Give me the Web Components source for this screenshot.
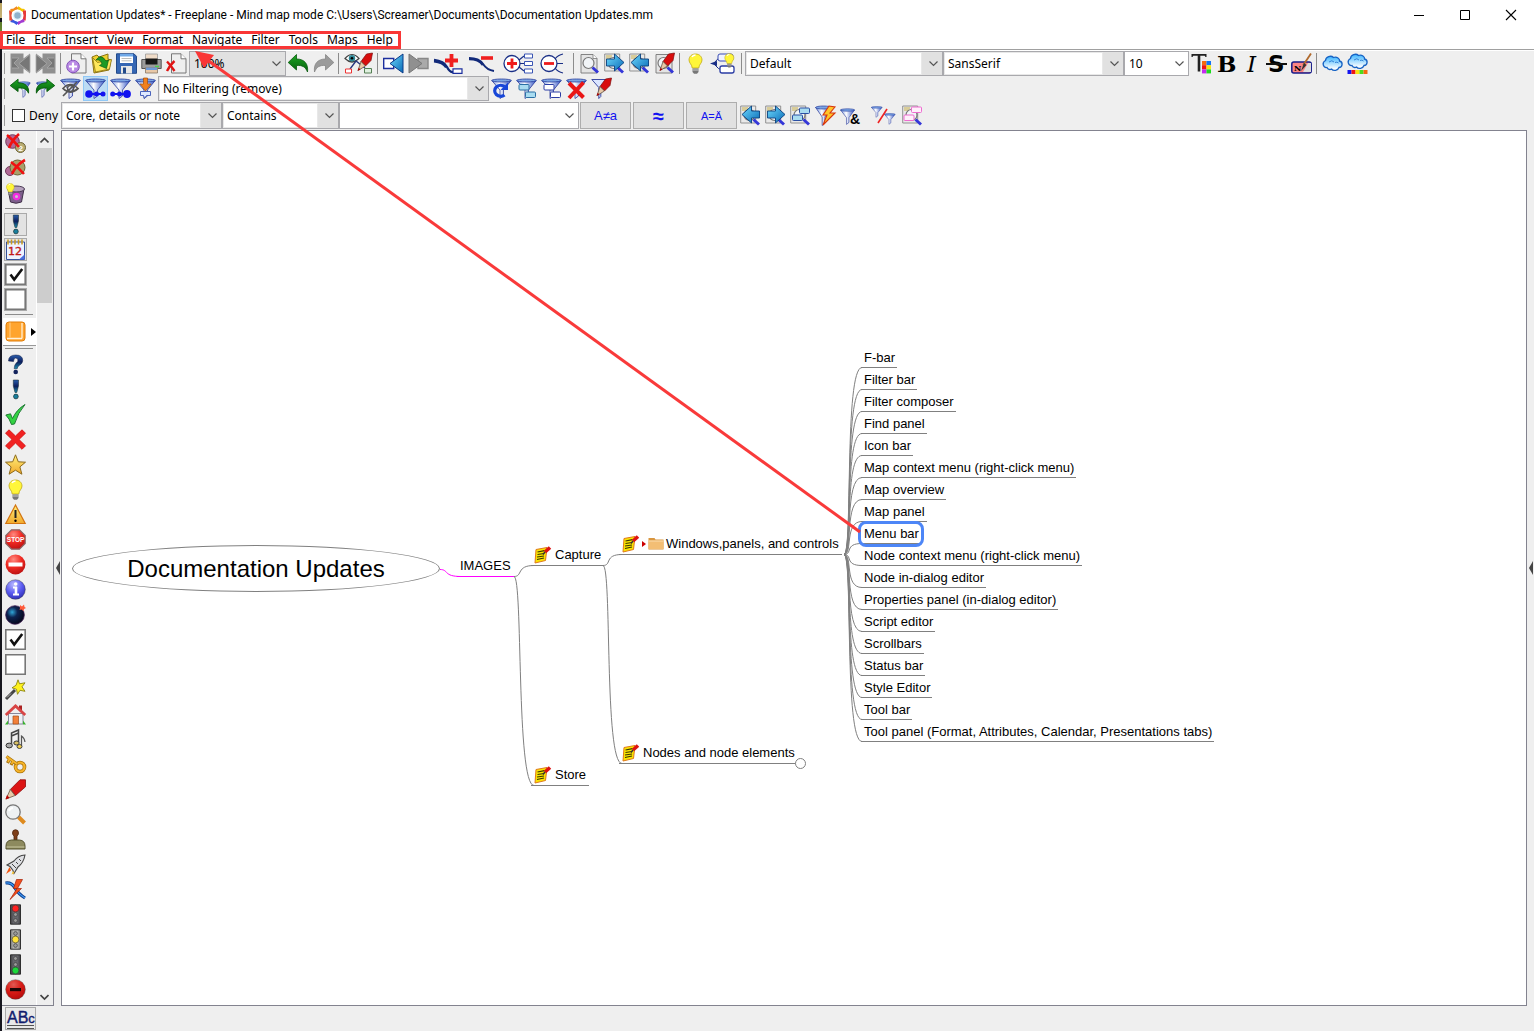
<!DOCTYPE html>
<html lang="en">
<head>
<meta charset="utf-8">
<title>Documentation Updates* - Freeplane</title>
<style>
  html, body { margin: 0; }
  body {
    --edge: #808080;
    --face: #efefef;
    --ui: "Noto Sans", "Open Sans", sans-serif;
    background: var(--face);
    color: #000;
    font: 12px/16px var(--ui);
  }
</style>
</head>
<body>
<fp-app></fp-app>
<script>
const defs = `<defs>
<linearGradient id="gb" x1="0" y1="0" x2="1" y2="1"><stop offset="0" stop-color="#6fdcff"/><stop offset="1" stop-color="#0869b5"/></linearGradient>
<linearGradient id="gf" x1="0" y1="0" x2="1" y2="0"><stop offset="0" stop-color="#6f93e0"/><stop offset=".4" stop-color="#fff"/><stop offset="1" stop-color="#2a4fc4"/></linearGradient>
<linearGradient id="gg" x1="0" y1="0" x2="0" y2="1"><stop offset="0" stop-color="#1fa524"/><stop offset="1" stop-color="#05600d"/></linearGradient>
<linearGradient id="gy" x1="0" y1="0" x2="0" y2="1"><stop offset="0" stop-color="#fff07a"/><stop offset="1" stop-color="#f2a92c"/></linearGradient>
<radialGradient id="gr" cx=".4" cy=".25" r=".8"><stop offset="0" stop-color="#ff8a80"/><stop offset=".5" stop-color="#f02a22"/><stop offset="1" stop-color="#b80f0f"/></radialGradient>
<radialGradient id="gi" cx=".4" cy=".25" r=".8"><stop offset="0" stop-color="#b9b9ff"/><stop offset=".55" stop-color="#5a5af0"/><stop offset="1" stop-color="#2c2cb0"/></radialGradient>
<radialGradient id="gn" cx=".35" cy=".35" r=".7"><stop offset="0" stop-color="#2fa6d8"/><stop offset=".4" stop-color="#0d2350"/><stop offset="1" stop-color="#050518"/></radialGradient>
<linearGradient id="gq" x1="0" y1="0" x2="0" y2="1"><stop offset="0" stop-color="#2a5fae"/><stop offset=".5" stop-color="#0b1d5c"/><stop offset="1" stop-color="#1c8fae"/></linearGradient>
<linearGradient id="gc" x1="0" y1="0" x2="0" y2="1"><stop offset="0" stop-color="#3ab4ff"/><stop offset=".9" stop-color="#fff"/></linearGradient>
</defs>`;

/* Shared fragments, all on a 21-unit grid */
const funnel = `<path d="M.8 2.500h19.400l-7.700 9.500v6l-3.500 2.500v-8.500z" fill="url(#gf)" stroke="#2b3b9a" stroke-width=".8"/><ellipse cx="10.500" cy="2.500" rx="9.800" ry="1.500" fill="#7ba6e4" stroke="#23389c" stroke-width=".8"/>`;
const smallFunnel = (x, y) => `<g transform="translate(${x} ${y}) scale(.55)">${funnel}</g>`;
const page = `<path d="M2 1.500h12l4 4v14.500h-16z" fill="#e4e4e4" stroke="#777" stroke-width=".9"/><path d="M14 1.500v4h4" fill="#fff" stroke="#777" stroke-width=".8"/>`;
const lens = `<circle cx="9.500" cy="10" r="5.500" fill="#f3f7fa" fill-opacity=".85" stroke="#777" stroke-width="1.200"/><path d="M13.500 14.500l5.500 5" stroke="#3436d8" stroke-width="3"/>`;
const find = `<path d="M.7 1h15v17h-15z" fill="#e9e9e9" stroke="#888" stroke-width=".9"/><path d="M2 3h6M2 5h5" stroke="#c8b04a"/>` + lens;
const arrowR = `<path d="M2.500 6h8v-5l9.500 8.500-9.500 8.500v-5h-8z" fill="url(#gb)" stroke="#0b3f7e" stroke-width=".9"/>`;
const arrowL = `<path d="M19.500 6h-8v-5l-9.500 8.500 9.500 8.500v-5h8z" fill="url(#gb)" stroke="#0b3f7e" stroke-width=".9"/>`;
const pen = `<path d="M20.500 0l-6 1-5.500 7.500 4.500 4.500 5.500-5.500z" fill="#d80d0d" stroke="#7c0808" stroke-width=".7"/><path d="M9 8.500l4.500 4.500-7.500 4.500z" fill="#e8c9a8" stroke="#543" stroke-width=".7"/><path d="M5.500 18l3-1.500-1.800-1.800z" fill="#a00"/>`;
const bulb = `<path d="M10.500 1c-4 0-6.500 2.700-6.500 6 0 3.200 3 4.300 3.200 8h6.600c.2-3.700 3.200-4.800 3.200-8 0-3.300-2.500-6-6.500-6z" fill="#fff63a" stroke="#c0a818" stroke-width=".8"/><path d="M7 4q1-2 3.500-2" stroke="#fff" stroke-width="1.500" fill="none"/><path d="M7.500 15.500h6v3.500l-1.500 1.700h-3l-1.500-1.700z" fill="#777"/><path d="M7.500 17h6" stroke="#ccc"/>`;
const check = `<path d="M.8.8h19.400v19.400h-19.400z" fill="#fff" stroke="#777" stroke-width="1.600"/>`;
const tick = `<path d="M5.500 10.500l3.700 5 8-10.500" fill="none" stroke="#111" stroke-width="2.600"/>`;
const cloud = `<path d="M5 14.500c-4 .5-5.500-5-1.500-7 .2-4 5.500-5.500 8-3 3.500-1 6.500 1 6 3.500 4 1 3 6.500-.5 6.500-1 3-5.500 4-7.500 1.500-1.500 1-3.500.5-4.500-1.500z" fill="url(#gc)" stroke="#1763c4" stroke-width="1.300"/><path d="M7 9q3-2.500 5 0M13 9.500q2-1 3.500.5" fill="none" stroke="#2a7bd2" stroke-width=".9"/>`;
const light = (i) => `<path d="M5.500.8h10v19.400h-10z" fill="${i === 1 ? '#8a8a8a' : '#4c4c50'}" stroke="#222" stroke-width=".9"/><path d="M7.500 1.500h6v18h-6z" fill="${i === 1 ? '#b5b5b0' : '#66666c'}"/>` +
  ['#f22', '#ffe23a', '#1bd83a'].map((c, n) => `<circle cx="10.500" cy="${4.500 + 6 * n}" r="${n === i ? 3.400 : 1.900}" fill="${n === i ? c : '#999'}" stroke="#333" stroke-width=".6"/>`).join('');
const ball = (fill) => `<circle cx="10.500" cy="10.500" r="9.800" fill="${fill}" stroke="#333" stroke-opacity=".5" stroke-width=".8"/>`;
const box = (x, y, f, s) => `<rect x="${x}" y="${y}" width="10" height="5.500" rx="1" fill="${f}" stroke="${s}"/>`;

const icons = {
  logo: `<g stroke-width="3" fill="none"><path d="M10.500 2.500l3.500 2.500 3.500.5" stroke="#f5c400"/><path d="M17.500 5.500v5l-.3 5" stroke="#e63a3a"/><path d="M17.200 15.500l-3.700 1-3 2.200" stroke="#a33bd1"/><path d="M10.500 18.700l-3-2.200-3.700-1" stroke="#3a57e0"/><path d="M3.800 15.500v-5l-.3-5" stroke="#e8503a"/><path d="M3.500 5.500l3.500-.5 3.500-2.500" stroke="#f28a1e"/></g><circle cx="10.500" cy="10.500" r="5.300" fill="#dff1fb" stroke="#fff" stroke-width="1.500"/><circle cx="10.500" cy="10.500" r="3.200" fill="#8fb2cc"/>`,
  mapback: `<path d="M.5.5h13v5l6.500-5v20l-6.500-5v5h-13z" fill="#8f8f8f"/><path d="M2 5h7l-5 5 5 5h-7M9 10.500l11-9v18z" fill="#777" stroke="#aaa" stroke-width=".8"/>`,
  mapnext: `<path d="M20.500.5h-13v5l-6.500-5v20l6.500-5v5h13z" fill="#8f8f8f"/><path d="M19 5h-7l5 5-5 5h7M12 10.500l-11-9v18z" fill="#777" stroke="#aaa" stroke-width=".8"/>`,
  newmap: `<path d="M5.500.8h9.500l5 5v14.200h-14.500z" fill="#efefef" stroke="#777"/><path d="M15 .8v5h5" fill="#fff" stroke="#777"/><circle cx="7" cy="13.500" r="6.300" fill="#b98ae4" stroke="#8656bb"/><path d="M7 9.500v8M3 13.500h8" stroke="#fff" stroke-width="2.200"/>`,
  open: `<path d="M1 4l5-2 2 2 9-3v5l3 1-2 10-15 3z" fill="#f0d02e" stroke="#8b7414"/><path d="M1.500 4.500l3 14.500 14-3 2-9.500-14 3z" fill="#ffe75a" stroke="#8b7414" stroke-width=".8"/><path d="M5 7q5-7 10 1l2.500-1-2 8.500-7-3 2.500-1.500q-1.500-5-6-4z" fill="#1d9a25" stroke="#0a5c10" stroke-width=".7"/>`,
  save: `<path d="M.5.8h17.500l2.500 2.500v17h-20z" fill="#3566b4" stroke="#234a8a"/><path d="M4 1h13v9h-13z" fill="#fff"/><path d="M4 1h13v2.500h-13z" fill="#6fa8e8"/><path d="M5.500 5.500h10M5.500 7.800h10" stroke="#bbb"/><path d="M5 13h11v7.500h-11z" fill="#e7e7e7"/><path d="M7 14.500h3v6h-3z" fill="#234a8a"/>`,
  print: `<path d="M4.500 1h12v7h-12z" fill="#f0dcc8" stroke="#999" stroke-width=".8"/><path d="M.8 6.500h19.400v9h-19.400z" fill="#9c9c9c" stroke="#555"/><path d="M4.500 5.500h12v6h-12z" fill="#181818"/><path d="M14 13.500h4" stroke="#4bd14b" stroke-width="1.500"/><path d="M4.500 14.500h12v5.500h-12z" fill="#e8c8a8" stroke="#876" stroke-width=".8"/><path d="M5 14.500h11v2.500h-11z" fill="#6f9bd8"/>`,
  closemap: `<path d="M5.500.8h9.500l5 5v14.200h-14.500z" fill="#efefef" stroke="#777"/><path d="M15 .8v5h5" fill="#fff" stroke="#777"/><path d="M1 8.500q4 4 7.500 9.500M8.500 8q-4.500 4-7.500 10" stroke="#e01515" stroke-width="2.400" fill="none"/>`,
  undo: `<path d="M8.500 1.500v4.500c8 0 12 5 11 13-2-5-5-7-11-6.500v4.500l-8.300-7.500z" fill="url(#gg)" stroke="#075a0c" stroke-width=".8"/>`,
  redo: `<path d="M12.500 1.500v4.500c-8 0-12 5-11 13 2-5 5-7 11-6.500v4.500l8.300-7.500z" fill="#9a9a9a" stroke="#858585" stroke-width=".8"/>`,
  eyepen: `<path d="M1 5.500q7-8 14 0q-7 7-14 0z" fill="#fff" stroke="#444" stroke-width="1.200"/><circle cx="8" cy="5.300" r="3.200" fill="#2f8796"/><circle cx="8" cy="5.300" r="1.300"/><path d="M6 16l6-8 9 7" fill="none" stroke="#26367e" stroke-width="1.300"/><g transform="translate(8 0)">${pen}</g><path d="M1.500 16h6v4h-6z" fill="#fff" stroke="#e33"/><path d="M20.500 15.500h7v4.500h-7z" fill="#dff0df" stroke="#557f55"/>`,
  prev: `<path d="M.7 5.500h10v10h-10z" fill="#fff" stroke="#1c2f9e" stroke-width="1.400"/><path d="M20 1v19l-13-9.500z" fill="url(#gb)" stroke="#0a3a88"/>`,
  next: `<path d="M10 5.500h10v10h-10z" fill="#aaa" stroke="#888" stroke-width="1.400"/><path d="M1 1v19l13-9.500z" fill="#909090" stroke="#777"/>`,
  addnode: `<path d="M1 7q10 1 13 7t7 5" fill="none" stroke="#122a7a" stroke-width="2.300"/><path d="M1 8.500q9 1 12 6" stroke="#122a7a" stroke-width="2" fill="none"/><path d="M18.500 1v13M12 7.500h13" stroke="#f01f1f" stroke-width="3.800"/><path d="M20 15.800h9v4.500h-9z" fill="#fff" stroke="#1c2f9e" stroke-width="1.200"/>`,
  subnode: `<path d="M1 5q10 0 14 6t11 7" fill="none" stroke="#122a7a" stroke-width="2"/><path d="M1 6q10 0 14 6" fill="none" stroke="#122a7a" stroke-width="2.600"/><path d="M13 5h12" stroke="#f01f1f" stroke-width="3.600"/>`,
  unfold: `<circle cx="9" cy="10.500" r="8" fill="#fff" stroke="#1a2f86" stroke-width="1.300"/><path d="M9 5.500v10M4 10.500h10" stroke="#ee1c1c" stroke-width="2.800"/><path d="M16 7l5-4M17 10.500h4M16 14l5 4" stroke="#1a2f86" stroke-width="1.200"/><path d="M21.500 1h8v4h-8zM21.500 8.500h8v4h-8zM21.500 16h8v4h-8z" fill="#fff" stroke="#3a55b4"/>`,
  fold: `<circle cx="11" cy="10.500" r="8" fill="#fff" stroke="#1a2f86" stroke-width="1.300"/><path d="M6 10.500h10" stroke="#ee1c1c" stroke-width="2.800"/><path d="M17 6q3-4 8-5M19 10.500h6M17 15q3 4 8 5" stroke="#1a2f86" stroke-width="1.200" fill="none"/>`,
  find: page + lens,
  findnext: find + arrowR,
  findprev: find + arrowL,
  findpen: page + lens + pen,
  bulb,
  bulbnode: `<path d="M0 10.500l7-2.500v5z" fill="#1a2f86"/><path d="M4 10q5-6 8-7M4 11q5 6 8 6" stroke="#1a2f86" fill="none"/><rect x="8" y="1" width="15" height="7" rx="2" fill="#f0f3ff" stroke="#3a4db4"/><rect x="10" y="13" width="14" height="7" rx="2" fill="#fff" stroke="#2a3ca4" stroke-width="1.300"/><g transform="translate(12 0) scale(.7)">${bulb}</g>`,
  fundo: `<g transform="translate(7 3) scale(.65 .8)">${funnel}</g><g transform="scale(.95 .8)"><path d="M8.500 1.500v4.500c8 0 12 5 11 13-2-5-5-7-11-6.500v4.500l-8.300-7.500z" fill="url(#gg)" stroke="#075a0c"/></g>`,
  fredo: `<g transform="translate(1 3) scale(.65 .8)">${funnel}</g><g transform="scale(.95 .8)"><path d="M12.500 1.500v4.500c-8 0-12 5-11 13 2-5 5-7 11-6.500v4.500l8.300-7.500z" fill="url(#gg)" stroke="#075a0c"/></g>`,
  fhide: funnel + `<path d="M3 10.500q7-8 15 0q-8 7-15 0zM3 18l14-14" fill="none" stroke="#555" stroke-width="1.700"/><circle cx="10.500" cy="10.500" r="3" fill="none" stroke="#555" stroke-width="1.500"/>`,
  fdown: funnel + `<path d="M5 16h12" stroke="#1212f0" stroke-width="2"/><circle cx="4" cy="16" r="3.800" fill="#1212f0"/><circle cx="11.500" cy="16" r="2.500" fill="#1212f0"/><circle cx="18" cy="16" r="2.500" fill="#1212f0"/>`,
  fup: funnel + `<path d="M3 16h12" stroke="#1212f0" stroke-width="2"/><circle cx="2.700" cy="16" r="2.500" fill="#1212f0"/><circle cx="9.500" cy="16" r="2.500" fill="#1212f0"/><circle cx="17" cy="16" r="3.900" fill="#1212f0"/>`,
  fapply: funnel + `<path d="M8.500 0h4v6h3.500l-5.500 7-5.500-7h3.500z" fill="#f2801c" stroke="#a34e08" stroke-width=".7"/><path d="M5.500 13.500h10v4h-4l-2 3-1-3h-3z" fill="#dfe9ff" stroke="#3a55b4" stroke-width=".9"/>`,
  frefresh: funnel + `<path d="M13.500 8.500a6 5.500 0 1 0 0 8.500" stroke="#1746d8" stroke-width="3.200" fill="none"/><path d="M9.500 12h7.500v-7.500z" fill="#1746d8"/>`,
  fsel: funnel + box(3, 6.500, '#a9dcf0', '#2a6fa4') + box(9.500, 14, '#a9dcf0', '#2a6fa4'),
  fsel2: funnel + box(3, 6.500, '#fff', '#2a3ca4') + box(9.500, 14, '#fff', '#2a3ca4'),
  fdel: funnel + `<path d="M3 5l14.500 14.500M17.500 4.500l-14.500 15.500" stroke="#ea1616" stroke-width="4"/>`,
  fedit: `<path d="M.8 1.500h15l-6 8v9l-2 2v-11z" fill="#dbe6ff" stroke="#2b3b9a" stroke-width=".9"/>` + pen,
  findsel: find + box(9.500, 3, '#a9dcf0', '#2a4fa4') + box(2.500, 10, '#a9dcf0', '#2a4fa4'),
  flash: `<g transform="scale(.8 1)">${funnel}</g><path d="M14 1l-6 9h4l-4 10 12-12h-5l5-6z" fill="#ffc52a" stroke="#d8350d" stroke-width="1.100"/>`,
  fand: `<g transform="translate(0 3) scale(.72 .8)">${funnel}</g><text x="10" y="19" font-family="Liberation Sans" font-weight="700" font-size="14">&amp;</text>`,
  for: smallFunnel(0, 1) + smallFunnel(13, 8) + `<path d="M7 18l9-14" stroke="#e22" stroke-width="1.600"/>`,
  findpink: find + box(9.500, 2, '#fff0fb', '#ee6bd0') + box(2, 10, '#fff0fb', '#ee6bd0'),
  tcolor: `<path d="M.5 1h15v3h-1l-.8-1.300h-4.400v15.800h-2.600v-15.800h-4.400l-.8 1.300h-1z" fill="#222"/><path d="M11 8h4.500v4.200h-4.500z" fill="#f56a0e"/><path d="M15.500 8h4.500v4.200h-4.500z" fill="#1273f3"/><path d="M11 12.200h4.500v4.200h-4.500z" fill="#f01414"/><path d="M15.500 12.200h4.500v4.200h-4.500z" fill="#f7e410"/><path d="M11 16.400h4.500v4h-4.500z" fill="#c52af0"/><path d="M15.500 16.400h4.500v4h-4.500z" fill="#1ddc1d"/>`,
  bold: `<text x="1" y="19" font-family="DejaVu Serif" font-weight="700" font-size="23">B</text>`,
  italic: `<text x="6" y="19" font-family="DejaVu Serif" font-style="italic" font-size="23">I</text>`,
  strike: `<text x="2" y="19" font-family="DejaVu Sans" font-weight="700" font-size="23">S</text><path d="M0 11h21" stroke="#111" stroke-width="2"/>`,
  nodestyle: `<rect x=".8" y="9" width="19.400" height="11" rx="2" fill="#fb8484" stroke="#161a8a" stroke-width="1.500"/><path d="M12 19l5-9h3v9z" fill="#ddd"/><text x="3" y="18" font-family="DejaVu Serif" font-weight="700" font-size="8">N</text><path d="M20 .5l-8 12" stroke="#b0692c" stroke-width="1.800"/><path d="M13 10l2.500 2-5.500 6z" fill="#333"/>`,
  cloud,
  cloudcolor: `<g transform="translate(0 -2)">${cloud}</g><path d="M.5 17h4v4h-4z" fill="#1414f0"/><path d="M4.500 17h4v4h-4z" fill="#f01414"/><path d="M8.500 17h4v4h-4z" fill="#f7e410"/><path d="M12.500 17h4v4h-4z" fill="#4cdc1d"/><path d="M16.500 17h4v4h-4z" fill="#f56a0e"/>`,
  delfirst: `<circle cx="7.500" cy="8.500" r="6.800" fill="#b26a97" stroke="#713a5c"/><circle cx="15.500" cy="14.500" r="5" fill="#b9ad72" stroke="#6b6236"/><text x="13.500" y="18" font-family="Liberation Sans" font-weight="700" font-size="8" fill="#fff">2</text><path d="M2 2q6 5 12 12M14 1q-7 6-10 14" fill="none" stroke="#f01010" stroke-width="2.600"/>`,
  dellast: `<circle cx="5" cy="13" r="4.500" fill="#b26a97" stroke="#713a5c"/><circle cx="12.500" cy="9.500" r="7.500" fill="#a8a06a" stroke="#6b6236"/><path d="M6 4q7 5 13 12M20 2q-9 5-13 14" fill="none" stroke="#f01010" stroke-width="2.600"/>`,
  trash: `<path d="M3 6h16l-2.500 13q-5.500 2.500-11 0z" fill="#7d5f8c" stroke="#3f3048"/><ellipse cx="11" cy="6" rx="8.500" ry="3" fill="#b5a2bd" stroke="#4c3b55"/><circle cx="11.500" cy="13.500" r="2.700" fill="#cdb8d4" stroke="#f22de0" stroke-width="2.200"/><g transform="translate(-1 0) scale(.6)">${bulb}</g>`,
  excl: `<path d="M8.300 1h5.200q.8 6-1.700 12.500h-1.800q-2.500-6.500-1.700-12.500z" fill="url(#gq)" stroke="#122" stroke-width=".5"/><circle cx="10.900" cy="17.500" r="2.400" fill="#197e9c" stroke="#122" stroke-width=".6"/>`,
  calendar: `<path d="M1.500 3h18v17.500h-18z" fill="#eef3ff" stroke="#34519c"/><path d="M14 20.500l5.500-5v5z" fill="#4b6fe0"/><path d="M3 .5v5M6.500.5v5M10 .5v5M13.500.5v5M17 .5v5" stroke="#c8991d" stroke-width="1.500"/><text x="3" y="16" font-family="DejaVu Sans" font-size="11" fill="#c21818" stroke="#c21818" stroke-width=".4">12</text>`,
  checked: check + tick,
  unchecked: check,
  book: `<rect x="1" y="1" width="19" height="19" rx="3" fill="#ffa42e" stroke="#e07d08"/><path d="M2 17.500h15M17 2v15.500" stroke="#fff0d8" stroke-width="1.300"/><path d="M5 1.500v15" stroke="#ffcf8a"/>`,
  question: `<path d="M3.500 7q0-6 7.200-6 7 0 7 5.500 0 3-3.500 5-2 1.300-2 3.300h-3q-.2-3.700 2-5.700 2.200-1.500 1.700-3.300-.7-2-2.400-1.700-2 .5-2 3.400z" fill="url(#gq)" stroke="#0b1540" stroke-width=".5"/><circle cx="10.700" cy="18" r="2.300" fill="#12225c"/>`,
  ok: `<path d="M.8 11l4.700-1.200 2 4.700q4-9 12.500-14-7 8-10.500 19.500l-3 .5q-2-6-5.700-9.500z" fill="#33d243" stroke="#14722a" stroke-width=".9"/>`,
  no: `<path d="M4 .8l6.500 6.200 6.500-6.200 3.500 3.400-6.500 6.300 6.500 6.300-3.500 3.500-6.500-6.300-6.500 6.300-3.500-3.500 6.500-6.300-6.500-6.300z" fill="#f12222" stroke="#d01010" stroke-width=".8"/>`,
  star: `<path d="M10.500.8l2.800 7 7.200.4-5.600 4.700 2 7.300-6.400-4-6.400 4 2-7.300-5.600-4.700 7.200-.4z" fill="url(#gy)" stroke="#8d6a1c"/>`,
  warn: `<path d="M10.500 1l9.700 18.500h-19.400z" fill="url(#gy)" stroke="#d37410" stroke-width="1.200"/><path d="M10.500 6v8" stroke="#222" stroke-width="2"/><circle cx="10.500" cy="16.700" r="1.200"/>`,
  stop: `<path d="M6.500.8h8l5.700 5.700v8l-5.700 5.700h-8l-5.700-5.700v-8z" fill="url(#gr)" stroke="#8a6a6a" stroke-width="1.200"/><text x="1.800" y="13" font-family="Liberation Sans" font-weight="700" font-size="6.500" fill="#fff">STOP</text>`,
  noentry: `<circle cx="10.500" cy="10.500" r="9.900" fill="url(#gr)"/><path d="M3.500 8.500h14v4h-14z" fill="#fff"/>`,
  info: ball('url(#gi)') + `<path d="M8 8.500h3v7M8 15.500h6" stroke="#fff" stroke-width="2" fill="none"/><path d="M11 8v7.500" stroke="#fff" stroke-width="2.600"/><circle cx="10.700" cy="5" r="1.800" fill="#fff"/>`,
  bomb: `<circle cx="10" cy="11" r="9.300" fill="url(#gn)" stroke="#3c1a50" stroke-width=".8"/><path d="M15 1l2 1.500 2-2 .5 2.500 1.500 1-2 1-.5 2-2-1.500-2 .5.500-2z" fill="#ff5a3a"/>`,
  wand: `<path d="M1 20l9-9" stroke="#444" stroke-width="3"/><path d="M2 18.500l4-4" stroke="#bbb"/><path d="M13 .8l1.500 4 5.500-1-3 4 3 4.500-5-1-2.500 4-1-5-4.500-1.500 4-2.500z" fill="#fff21c" stroke="#8b8410" stroke-width=".9"/>`,
  home: `<path d="M3.500 9.500h14.500v10.500h-14.500z" fill="#eef2f6" stroke="#889"/><path d="M8 12h5.500v8h-5.500z" fill="#f3803a" stroke="#a44d18" stroke-width=".7"/><path d="M14 1.500h3v5h-3z" fill="#a22"/><path d="M.8 11l9.700-9 9.700 9" fill="none" stroke="#d84545" stroke-width="2.800"/><path d="M0 20.500l3-4v4zM18 20.500v-4l3 4z" fill="#37b12c"/>`,
  music: `<path d="M6.500 15.500v-11.500l7-3v12M6.500 7l7-3" fill="none" stroke="#444" stroke-width="1.500"/><ellipse cx="4.200" cy="16.500" rx="3.200" ry="2.400" fill="#aaa" stroke="#333"/><ellipse cx="11.500" cy="14" rx="2.700" ry="2" fill="#d9bf62" stroke="#333"/><path d="M16.500 17v-10q3 2 3.500 6" stroke="#555" fill="none" stroke-width="1.200"/><ellipse cx="14.500" cy="17.500" rx="2.500" ry="2" fill="#f3cf4a" stroke="#444"/>`,
  key: `<circle cx="15" cy="13" r="4.500" fill="none" stroke="#a8720a" stroke-width="3.600"/><circle cx="15" cy="13" r="4.500" fill="none" stroke="#f7b428" stroke-width="2.200"/><path d="M12 10l-10.500-7.500M4.500 5l-2 4M8 7.500l-2 3.500" stroke="#a8720a" stroke-width="3.200"/><path d="M12 10l-10.500-7.500M4.500 5l-1.500 3M8 7.500l-1.500 2.500" stroke="#f5b52c" stroke-width="1.700"/>`,
  pencil: `<path d="M15 .8l5.500 0v7l-10 8.700-5.200-6z" fill="#dc1414" stroke="#8d0c0c" stroke-width=".8"/><path d="M5.300 10.500l4.700 6-9 3.500z" fill="#e8c9a8" stroke="#654" stroke-width=".8"/><path d="M.5 20.500l4-1.500-2.500-3z" fill="#b00"/>`,
  zoom: `<path d="M13.500 13l6 6" stroke="#de8a1e" stroke-width="4"/><circle cx="8" cy="8" r="7.200" fill="#eef1f3" stroke="#777" stroke-width="1.300"/><path d="M4 7q1-3 4-3" stroke="#fff" stroke-width="2" fill="none"/>`,
  stamp: `<path d="M7.500 4a3 3.300 0 0 1 6 0q0 2-1.500 3v4h-3v-4q-1.500-1-1.500-3z" fill="#7e3f19" stroke="#4b230b" stroke-width=".8"/><path d="M1 17q0-5.500 5.500-6h8q5.500.5 5.500 6v3h-19z" fill="#8d8a5f" stroke="#55532f"/><path d="M1.500 18h18" stroke="#c8c6a0"/>`,
  rocket: `<path d="M20 1q-7 .5-11 6l-7 4 3 1.500 3 4 1 3 4-6.500q5.500-4 7-12z" fill="#dfe0e4" stroke="#444" stroke-width="1.100"/><path d="M14 5l2 2M7 10l4 4M11 8l2 2" stroke="#444"/><path d="M4.500 13l-3.500 7 5-3.500z" fill="#f4560f"/><path d="M8 17l-1.500 3.500 3-1.500z" fill="#f7c22a"/>`,
  broken: `<path d="M.5 4q6-1 9.500 5t10 10" fill="none" stroke="#0c3b8e" stroke-width="3.200"/><path d="M.5 4q6-1 9.500 5t10 10" fill="none" stroke="#3e9af0" stroke-width="1.200"/><path d="M11.500.5l-3 9h3.500l-7 11 11.500-11h-4l5-9z" fill="#f5501c" stroke="#a31d06" stroke-width=".7"/>`,
  red: light(0), yellow: light(1), green: light(2),
  minus: ball('url(#gr)') + `<circle cx="10.500" cy="10.500" r="9.300" fill="#a00" opacity=".35"/><path d="M5 9h11v3.200h-11z" fill="#1c0505"/>`,
  abc: `<text x="1" y="15" font-family="Liberation Sans" font-size="16" fill="#111c6e" stroke="#111c6e" stroke-width=".4">AB<tspan font-size="13">c</tspan></text><path d="M1 17.500h27M1 20.500h27" stroke="#555"/>`,
  note: `<path d="M2 3.500l11-2-1.500 13-10.500 2.500z" fill="#f9e400" stroke="#e07a1c" stroke-width="1"/><path d="M3.500 6l7-1.300M3.500 8.500l6.500-1M3 11l7-1M3 13.500l7-1.500" stroke="#3a3600" stroke-width="1.200"/><path d="M16 1.500l-5 4.500" stroke="#dd1212" stroke-width="3.600"/><path d="M11 6l-2 2.500" stroke="#333" stroke-width="1.500"/>`,
  folder: `<path d="M.5 2h6l1 1.500h8v10h-15z" fill="#d9963f"/><path d="M.5 4.500h15v8.500h-15z" fill="#f3be74"/><path d="M.5 5h15" stroke="#fbdcae"/>`,
};

/* Builds an element's open shadow root from its template text */
class Base extends HTMLElement {
  connectedCallback() {
    if (this.shadowRoot) return;
    const t = document.createElement('template');
    t.innerHTML = `<style>*{box-sizing:border-box}</style>` + this.render();
    this.attachShadow({ mode: 'open' }).append(t.content.cloneNode(true));
  }
}

class FpIcon extends Base {
  render() {
    const w = this.getAttribute('w') || 21, h = this.getAttribute('h') || 21;
    return `<style>:host{display:inline-flex;flex:none}svg{display:block;overflow:visible}</style>
      <svg width="${w}" height="${h}" viewBox="0 0 ${w} ${h}" aria-hidden="true">${defs}${icons[this.getAttribute('name')] || ''}</svg>`;
  }
}

class FpTool extends Base {
  render() {
    const w = +(this.getAttribute('w') || 21), n = this.getAttribute('name');
    return `<style>:host{display:block;flex:none}
      button{display:flex;align-items:center;justify-content:center;width:${w + 4}px;height:25px;padding:0;border:0;background:none}
      :host([on]) button{background:#bcdcf4;border:1px solid #90c8f6}
      :host([framed]){padding:1px}
      :host([framed]) button{width:23px;height:23px;background:#e3e3e3;border:1px solid #aaa}
      </style><button type="button" aria-label="${n}"><fp-icon name="${n}" w="${w}"></fp-icon></button>`;
  }
}

class FpTextTool extends Base {
  render() {
    return `<style>:host{display:block;flex:none}
      button{width:51px;height:27px;margin:0 1px;padding:0;background:#e1e1e1;border:1px solid #adadad;color:#1212f0;font:13px/20px "Liberation Sans",sans-serif}
      :host([small]) button{font-size:11px}:host([big]) button{font-weight:700;font-size:20px}
      </style><button type="button"><slot></slot></button>`;
  }
}

class FpSep extends Base {
  render() {
    return `<style>:host{display:block;flex:none;width:1px;height:21px;margin:0 3px 0 2px;background:#8c8c8c}
      :host([across]){width:28px;height:1px;margin:2px 0 3px 2px}</style>`;
  }
}

class FpSelect extends Base {
  render() {
    const v = this.getAttribute('value') || '';
    return `<style>
      :host{display:block;box-sizing:border-box;position:relative;flex:none;width:var(--w);height:25px;background:#e1e1e1;border:1px solid #a9a9ad}
      :host([tall]){height:27px}
      select{appearance:none;display:block;width:calc(100% - 20px);height:100%;padding:0 0 0 3px;border:1px solid #e8e8e8;border-radius:0;background:#fff;color:#000;font:12px/16px var(--ui)}
      :host([flat]) select{background:#e1e1e1;border-color:#e1e1e1}
      :host([plain]){background:#fff}
      :host([plain]) select{border-color:#fff}
      svg{position:absolute;right:4px;top:50%;margin-top:-3px}
      </style><select aria-label="${this.getAttribute('label')}"><option>${v}</option></select>
      <svg width="9" height="6" aria-hidden="true"><path d="M.5.5l4 4 4-4" fill="none" stroke="#555" stroke-width="1.200"/></svg>`;
  }
}

class FpToolbar extends Base {
  render() {
    return `<style>:host{display:flex;align-items:center;height:25px;padding-left:2px}
      :host([tall]){height:29px}
      i{width:1px;height:21px;margin-right:3px;background:#9a9a9a}</style><i></i><slot></slot>`;
  }
}

class FpDeny extends Base {
  render() {
    return `<style>:host{display:block;flex:none;width:53px}label{display:flex;align-items:center;gap:4px;padding-left:4px}
      input{appearance:none;width:13px;height:13px;margin:0;background:#fff;border:1px solid #333}</style>
      <label><input type="checkbox">Deny</label>`;
  }
}

class FpTitlebar extends Base {
  render() {
    return `<style>:host{display:flex;align-items:center;height:30px;background:#fff;padding:0 17px 0 5px;font:12px/16px Roboto,"Open Sans",sans-serif}
      h1{margin:0 0 0 3px;font:inherit;flex:1;white-space:nowrap}
      nav{display:flex;gap:34px}button{display:flex;padding:0;border:0;background:none}</style>
      <fp-icon name="logo"></fp-icon><h1><slot></slot></h1>
      <nav><button type="button" aria-label="Minimize"><svg width="12" height="12"><path d="M1 6.500h10" stroke="#000"/></svg></button>
      <button type="button" aria-label="Maximize"><svg width="12" height="12"><path d="M1.500 1.500h9v9h-9z" fill="none" stroke="#000"/></svg></button>
      <button type="button" aria-label="Close"><svg width="12" height="12"><path d="M1 1l10 10M11 1l-10 10" stroke="#000" stroke-width="1.100"/></svg></button></nav>`;
  }
}

class FpMenubar extends Base {
  render() {
    const items = ['File', 'Edit', 'Insert', 'View', 'Format', 'Navigate', 'Filter', 'Tools', 'Maps', 'Help'];
    return `<style>:host{display:block;box-sizing:border-box;background:#fff;border-bottom:1px solid #a0a0a0;height:20px}
      nav{display:flex;gap:9px;padding:2px 0 0 4px}
      button{padding:0;border:0;background:none;color:#000;font:12px/16px var(--ui)}</style>
      <nav>${items.map(i => `<button type="button">${i}</button>`).join('')}</nav>`;
  }
}

class FpIconbar extends Base {
  render() {
    const t = (s) => s.split(' ').map(n => `<fp-tool name="${n}"></fp-tool>`).join('');
    const f = (s) => s.split(' ').map(n => `<fp-tool framed name="${n}"></fp-tool>`).join('');
    return `<style>:host{display:flex;flex:none;box-sizing:border-box;width:52px;border:1px solid #83838f;border-left:0}
      .tools{display:flex;flex-direction:column;flex:none;width:35px;padding:0 0 0 1px;border-right:1px solid #fff}
      .pick{display:flex;align-items:center;height:28px;background:#fff;border-bottom:1px solid #999}
      .pick svg{margin-left:3px}
      .bar{flex:1;display:flex;flex-direction:column;align-items:center;justify-content:space-between;padding:6px 1px 4px 0}
      .thumb{width:100%;height:155px;margin:4px 0 auto;background:#cdcdcd}</style>
      <div class="tools">${t('delfirst dellast trash')}<fp-sep across></fp-sep>${f('excl calendar checked unchecked')}<fp-sep across></fp-sep>
      <div class="pick"><fp-tool name="book"></fp-tool><svg width="5" height="8"><path d="M0 0l5 4-5 4z"/></svg></div><fp-sep across></fp-sep>
      ${t('question excl ok no star bulb warn stop noentry info bomb checked unchecked wand home music key pencil zoom stamp rocket broken red yellow green minus')}</div>
      <div class="bar"><svg width="9" height="7"><path d="M.5 5.500l4-4 4 4" fill="none" stroke="#444" stroke-width="1.700"/></svg><div class="thumb"></div><svg width="9" height="7"><path d="M.5 1l4 4 4-4" fill="none" stroke="#444" stroke-width="1.700"/></svg></div>`;
  }
}

class FpNode extends Base {
  render() {
    return `<style>:host{position:absolute;left:var(--x);top:var(--y);box-sizing:border-box;display:flex;align-items:center;gap:3px;height:24px;padding:3px 3px 0;border-bottom:1px solid var(--line,var(--edge));white-space:nowrap}
      :host([root]){justify-content:center;width:368px;height:47px;padding:0;border:1px solid var(--edge);border-radius:50%;font-size:24px;line-height:28px}
      :host([tight]){gap:2px}
      </style><slot></slot>`;
  }
}

class FpLeaves extends Base {
  render() {
    const items = ['F-bar', 'Filter bar', 'Filter composer', 'Find panel', 'Icon bar', 'Map context menu (right-click menu)', 'Map overview', 'Map panel', 'Menu bar', 'Node context menu (right-click menu)', 'Node in-dialog editor', 'Properties panel (in-dialog editor)', 'Script editor', 'Scrollbars', 'Status bar', 'Style Editor', 'Tool bar', 'Tool panel (Format, Attributes, Calendar, Presentations tabs)'];
    return `<style>:host{position:absolute;left:var(--x);top:var(--y)}
      ul{display:flex;flex-direction:column;align-items:flex-start;margin:0;padding:0;list-style:none}
      li{position:relative;height:22px;padding:4px 2px 0 3px;border-bottom:1px solid var(--edge);white-space:nowrap}
      .sel::before{content:"";position:absolute;inset:-1px -3px -4px -3px;border:3px solid #4d86f7;border-radius:8px}
      </style><ul>${items.map(i => `<li${i === 'Menu bar' ? ' class="sel"' : ''}>${i}</li>`).join('')}</ul>`;
  }
}

class FpMap extends Base {
  render() {
    const ox = 62, oy = 131;
    const curve = (x1, y1, x2, y2) => `M${x1 - ox} ${y1 - oy + .5}C${x1 + 9 - ox} ${y1 - oy + .5} ${x2 - 18 - ox} ${y2 - oy + .5} ${x2 - ox} ${y2 - oy + .5}`;
    const edges = [curve(514, 576, 534, 565), curve(514, 576, 534, 785), curve(603, 565, 622, 554), curve(603, 565, 622, 763)];
    for (let i = 0; i < 18; i++) edges.push(curve(844, 554, 862, 367 + 22 * i));
    const at = (x, y) => `style="--x:${x - ox}px;--y:${y - oy}px"`;
    return `<style>:host{display:block;position:relative;flex:1;min-width:0;overflow:hidden;background:#fff;border:1px solid #83838f;font:13px/16px "Liberation Sans",Arial,sans-serif}
      .lines{position:absolute;left:0;top:0;width:100%;height:100%}
      .pink{--line:#ff00ff}</style>
      <svg class="lines" aria-hidden="true"><g fill="none" stroke="#808080"><path d="${edges.join('')}"/>
      <path d="${curve(440, 569, 461, 576)}" stroke="#ff00ff"/></g></svg>
      <fp-node root ${at(72, 545)}>Documentation Updates</fp-node>
      <fp-node class="pink" ${at(457, 553)}>IMAGES</fp-node>
      <fp-node ${at(531, 542)}><fp-icon name="note" w="18" h="18"></fp-icon>Capture</fp-node>
      <fp-node ${at(531, 762)}><fp-icon name="note" w="18" h="18"></fp-icon>Store</fp-node>
      <fp-node tight ${at(619, 531)}><fp-icon name="note" w="18" h="18"></fp-icon><svg width="4" height="6"><path d="M0 0l4 3-4 3z" fill="#c00"/></svg><fp-icon name="folder" w="16" h="16"></fp-icon>Windows,panels, and controls</fp-node>
      <fp-node ${at(619, 740)}><fp-icon name="note" w="18" h="18"></fp-icon>Nodes and node elements</fp-node>
      <svg class="lines" aria-hidden="true"><circle cx="738.500" cy="632.500" r="5" fill="#fff" stroke="#808080"/></svg>
      <fp-leaves ${at(861, 346)}></fp-leaves>`;
  }
}

class FpGrip extends Base {
  render() {
    return `<style>:host{display:flex;align-items:center;justify-content:center;flex:none;width:7px}</style>
      <svg width="4" height="14" aria-hidden="true"><path d="M4 0v14l-4-7z" fill="#444"/></svg>`;
  }
}

/* Red marker that points from a node to the menu bar */
class FpMarker extends Base {
  render() {
    return `<style>:host{position:absolute;left:0;top:0;pointer-events:none}svg{display:block}</style>
      <svg width="870" height="545" aria-hidden="true"><path d="M1.500 32.500h398v15h-398z" fill="none" stroke="#f93636" stroke-width="3"/>
      <path d="M860 532L206 59" stroke="#f93a3a" stroke-width="3"/><path d="M195 51l19 4-10 13z" fill="#f93636"/></svg>`;
  }
}

class FpApp extends Base {
  render() {
    const t = (s) => s.split(' ').map(n => { const [a, w] = n.split(':'); return a === '|' ? '<fp-sep></fp-sep>' : `<fp-tool name="${a}" w="${w || 21}"></fp-tool>`; }).join('');
    return `<style>:host{display:flex;flex-direction:column;box-sizing:border-box;position:relative;min-height:100vh;padding-left:2px;
        background:linear-gradient(#16161e 3px,#b9a25e 3px,#c9b578 18px,#16161e 18px,#16161e 22px,#5c7a2a 22px,#6b8a32 32px,#16161e 32px) left top/2px 100% no-repeat}
      main{display:flex;flex:1}
      footer{display:flex;align-items:center;height:25px;padding-left:3px}
      footer button{display:flex;padding:0;border:1px solid #aaa;background:#e9e9e9;height:23px}
      .bars{border-top:1px solid #fff}</style>
      <fp-titlebar>Documentation Updates* - Freeplane - Mind map mode C:\\Users\\Screamer\\Documents\\Documentation Updates.mm</fp-titlebar>
      <fp-menubar></fp-menubar>
      <div class="bars">
      <fp-toolbar>${t('mapback mapnext | newmap open save print closemap')}<fp-select flat label="Zoom" value="100%" style="--w:97px"></fp-select>${t('undo redo | eyepen:29 | prev next addnode:31 subnode:31 unfold:31 fold:31 | find findnext findprev findpen | bulb bulbnode:27 |')}<fp-select label="Style" value="Default" style="--w:198px"></fp-select><fp-select label="Font" value="SansSerif" style="--w:181px"></fp-select><fp-select plain label="Font size" value="10" style="--w:65px"></fp-select>${t('tcolor bold italic strike nodestyle | cloud cloudcolor')}</fp-toolbar>
      <fp-toolbar>${t('fundo fredo fhide')}<fp-tool on name="fdown"></fp-tool>${t('fup fapply')}<fp-select label="Filter" value="No Filtering (remove)" style="--w:331px"></fp-select>${t('frefresh fsel fsel2 fdel fedit')}</fp-toolbar>
      <fp-toolbar tall><fp-deny></fp-deny><fp-select tall label="Field" value="Core, details or note" style="--w:161px"></fp-select><fp-select tall label="Condition" value="Contains" style="--w:117px"></fp-select><fp-select tall plain label="Value" value="" style="--w:240px"></fp-select><fp-text-tool>A≠a</fp-text-tool><fp-text-tool big>≈</fp-text-tool><fp-text-tool small>A=Ä</fp-text-tool>${t('findprev findnext findsel flash fand:27 for:27 findpink:27')}</fp-toolbar>
      </div>
      <main><fp-iconbar></fp-iconbar><fp-grip></fp-grip><fp-map></fp-map><fp-grip></fp-grip></main>
      <footer><button type="button" aria-label="Spelling"><fp-icon name="abc" w="29"></fp-icon></button></footer>
      <fp-marker></fp-marker>`;
  }
}

const parts = { 'fp-icon': FpIcon, 'fp-tool': FpTool, 'fp-text-tool': FpTextTool, 'fp-sep': FpSep, 'fp-select': FpSelect, 'fp-toolbar': FpToolbar, 'fp-deny': FpDeny, 'fp-titlebar': FpTitlebar, 'fp-menubar': FpMenubar, 'fp-iconbar': FpIconbar, 'fp-node': FpNode, 'fp-leaves': FpLeaves, 'fp-map': FpMap, 'fp-grip': FpGrip, 'fp-marker': FpMarker, 'fp-app': FpApp };
for (const [name, cls] of Object.entries(parts)) customElements.define(name, cls);
</script>
</body>
</html>
